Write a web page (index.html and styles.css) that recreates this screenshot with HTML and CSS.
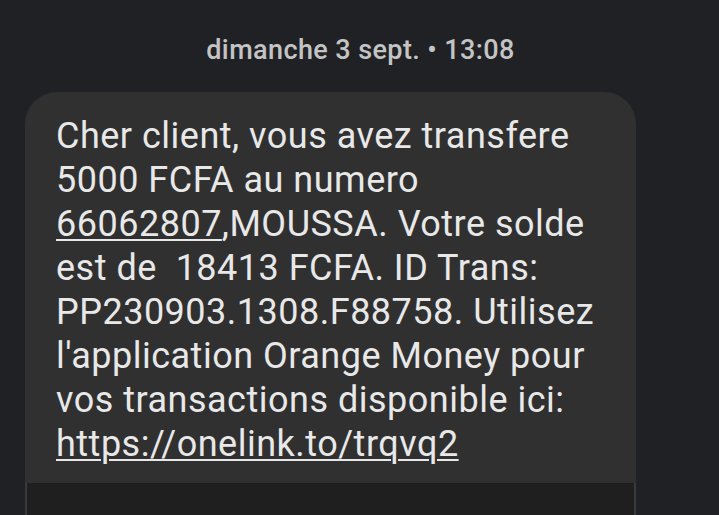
FILE: index.html
```html
<!DOCTYPE html>
<html lang="fr">
<head>
<meta charset="utf-8">
<link rel="stylesheet" href="styles.css">
</head>
<body>
<div class="thread">
  <div class="date">dimanche 3 sept. • 13:08</div>
  <div class="message">
    <div class="bubble">
      <p class="text">Cher client, vous avez transfere<br>5000 FCFA au numero<br><span class="u">66062807</span>,MOUSSA. Votre solde<br>est de&nbsp; 18413 FCFA. ID Trans:<br>PP230903.1308.F88758. Utilisez<br>l'application Orange Money pour<br>vos transactions disponible ici:<br><span class="u">https://onelink.to/trqvq2</span></p>
    </div>
    <div class="preview"></div>
  </div>
</div>
</body>
</html>
```
FILE: styles.css
```css
html, body {
  margin: 0;
  padding: 0;
  background: #202124;
  height: 100%;
  overflow: hidden;
}
.thread {
  font-family: Roboto, "Noto Sans", sans-serif;
  display: flex;
  flex-direction: column;
}
.date {
  text-align: center;
  color: #c4c4c4;
  font-size: 27px;
  font-weight: 500;
  letter-spacing: 0.4px;
  line-height: 30px;
  padding-top: 35px;
  height: 57px;
  padding-left: 2px;
}
.message {
  margin-left: 25px;
  width: 611px;
}
.bubble {
  background: #303030;
  border-radius: 32px 32px 0 0;
  padding: 22px 10px 17px 31px;
}
.text {
  margin: 0;
  color: #e8e8e8;
  font-size: 36px;
  letter-spacing: 0.5px;
  line-height: 44px;
  white-space: nowrap;
}
.u {
  text-decoration: underline;
  text-decoration-thickness: 2px;
  text-underline-offset: 3px;
}
.preview {
  height: 40px;
  background: #1f1f1f;
  border-left: 2px solid #3a3a3a;
  border-right: 2px solid #3a3a3a;
}
```
